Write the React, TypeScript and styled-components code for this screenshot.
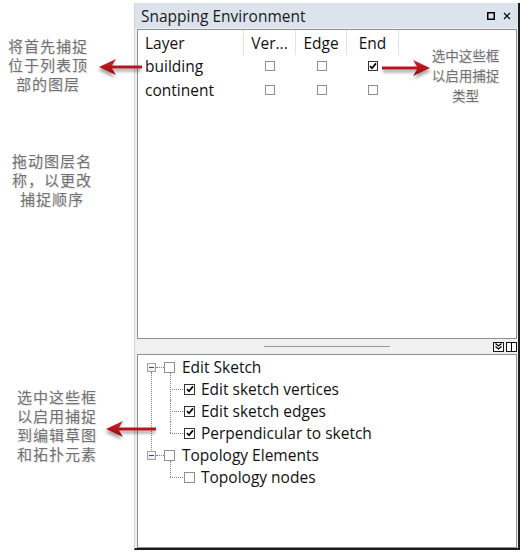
import styled, { createGlobalStyle } from "styled-components";

/* ── Global ──────────────────────────────────────────── */

const GlobalStyle = createGlobalStyle`
  * { box-sizing: border-box; }
  html, body { margin: 0; padding: 0; background: #fff; }
  body {
    font-family: "Open Sans", "Noto Sans", sans-serif;
    color: #111;
  }
`;

/* ── Page ────────────────────────────────────────────── */

const Page = styled.div`
  position: relative;
  width: 531px;
  height: 555px;
  padding-top: 3px;
  display: flex;
  overflow: hidden;
`;

const NotesColumn = styled.div`
  width: 134px;
  flex: none;
  display: flex;
  flex-direction: column;
`;

const Note = styled.div<{ $top: number; $left: number; $width: number }>`
  margin-top: ${(p) => p.$top}px;
  margin-left: ${(p) => p.$left}px;
  width: ${(p) => p.$width}px;
  font-family: "Noto Sans CJK SC", sans-serif;
  font-size: 15px;
  line-height: 19px;
  letter-spacing: 1px;
  text-align: center;
  color: #707070;
  text-shadow: 1px 1px 1px rgba(0, 0, 0, 0.12);
`;

const SideNote = styled(Note)`
  position: absolute;
  left: 293px;
  top: 15px;
  margin: 0;
  font-size: 13.5px;
  line-height: 20px;
  letter-spacing: 0;
`;

/* ── Window ──────────────────────────────────────────── */

const Window = styled.div`
  width: 386px;
  height: 547px;
  flex: none;
  display: flex;
  flex-direction: column;
  background: #f0f0f0;
  border-left: 1px solid #d2d2d2;
  border-right: 2px solid #1c1c1c;
  border-bottom: 2px solid #1c1c1c;
`;

const TitleBar = styled.div`
  height: 25px;
  flex: none;
  display: flex;
  align-items: center;
  justify-content: space-between;
  padding: 0 7px 0 6px;
  background: #dce3ec;
  font-size: 15.5px;
  color: #1a1a1a;
`;

const TitleButtons = styled.div`
  display: flex;
  align-items: center;
  gap: 8px;
`;

const WindowBody = styled.div`
  flex: 1;
  display: flex;
  flex-direction: column;
  padding: 1px 1px 0 2px;
`;

const Panel = styled.div<{ $height?: number }>`
  position: relative;
  background: #fff;
  border: 1px solid #8e9092;
  ${(p) => (p.$height ? `height: ${p.$height}px; flex: none;` : "flex: 1;")}
`;

/* ── Layer grid ──────────────────────────────────────── */

const Grid = styled.div`
  display: grid;
  grid-template-columns: 106px 52px 51px 52px;
  grid-auto-rows: 24px;
  font-size: 15.5px;
`;

const HeadCell = styled.div<{ $left?: boolean }>`
  height: 25px;
  display: flex;
  align-items: center;
  justify-content: ${(p) => (p.$left ? "flex-start" : "center")};
  padding-left: ${(p) => (p.$left ? "7px" : "0")};
  border-right: 1px solid #e3e3e3;
`;

const Cell = styled.div<{ $left?: boolean }>`
  display: flex;
  align-items: center;
  justify-content: ${(p) => (p.$left ? "flex-start" : "center")};
  padding-left: ${(p) => (p.$left ? "7px" : "0")};
`;

const Box = styled.span<{ $dark?: boolean; $size: number }>`
  width: ${(p) => p.$size}px;
  height: ${(p) => p.$size}px;
  flex: none;
  display: inline-flex;
  align-items: center;
  justify-content: center;
  background: #fff;
  border: 1px solid ${(p) => (p.$dark ? "#333" : "#8f8f8f")};
`;

/* ── Splitter ────────────────────────────────────────── */

const Splitter = styled.div`
  height: 15px;
  flex: none;
  display: grid;
  grid-template-columns: 1fr 126px 1fr;
  align-items: center;
`;

const Grip = styled.div`
  grid-column: 2;
  height: 1px;
  background: #9a9a9a;
`;

const PaneButtons = styled.div`
  grid-column: 3;
  justify-self: end;
  display: flex;
  gap: 2px;
`;

const PaneButton = styled.span`
  width: 11px;
  height: 10px;
  display: flex;
  align-items: center;
  justify-content: center;
  background: #fff;
  border: 1px solid #111;
`;

/* ── Tree ────────────────────────────────────────────── */

const Tree = styled.div`
  padding-top: 1px;
  font-size: 15.5px;
`;

const RootItem = styled.div`
  position: relative;
  &:not(:last-child)::after {
    content: "";
    position: absolute;
    left: 13px;
    top: 16px;
    bottom: -6px;
    border-left: 1px dotted #808080;
  }
`;

const RootRow = styled.div`
  height: 22px;
  display: flex;
  align-items: center;
  padding-left: 9px;
`;

const Expander = styled.span`
  width: 9px;
  height: 9px;
  flex: none;
  display: flex;
  align-items: center;
  justify-content: center;
  border: 1px solid #9aa3ae;
  background: linear-gradient(#fff, #e6e9ee);
  &::before {
    content: "";
    width: 5px;
    height: 1px;
    background: #3a4a6a;
  }
`;

const Connector = styled.span`
  width: 8px;
  flex: none;
  border-top: 1px dotted #808080;
`;

const Label = styled.span`
  margin-left: 7px;
  white-space: nowrap;
`;

const ChildRow = styled.div`
  position: relative;
  height: 22px;
  display: flex;
  align-items: center;
  margin-left: 32px;
  padding-left: 14px;
  &::before {
    content: "";
    position: absolute;
    left: 0;
    top: 11px;
    width: 13px;
    border-top: 1px dotted #808080;
  }
  &::after {
    content: "";
    position: absolute;
    left: 0;
    top: 0;
    height: 11px;
    border-left: 1px dotted #808080;
  }
  &:first-child::after { top: -5px; height: 16px; }
  &:not(:last-child)::after { height: 22px; }
  &:first-child:not(:last-child)::after { height: 27px; }
`;

const ChildLabel = styled(Label)`
  margin-left: 6px;
`;

/* ── Arrows ──────────────────────────────────────────── */

const ArrowWrap = styled.svg<{ $left: number; $top: number }>`
  position: absolute;
  left: ${(p) => p.$left}px;
  top: ${(p) => p.$top}px;
  overflow: visible;
  pointer-events: none;
`;

/* ── Pieces ──────────────────────────────────────────── */

function CheckMark() {
  return (
    <svg width="8" height="8" viewBox="0 0 8 8">
      <path d="M1 4.2 L3 6.3 L7 1.4" stroke="#000" strokeWidth="1.7" fill="none" />
    </svg>
  );
}

function CheckBox({ checked, dark, size }: { checked?: boolean; dark?: boolean; size: number }) {
  return (
    <Box $dark={dark || checked} $size={size}>
      {checked && <CheckMark />}
    </Box>
  );
}

function Arrow({ left, top, length, flip }: { left: number; top: number; length: number; flip?: boolean }) {
  const L = length;
  const d = `M${L} 0 L${L - 17} -8 L${L - 13} -1.6 L0 -1.4 L0 1.4 L${L - 13} 1.6 L${L - 17} 8 Z`;
  return (
    <ArrowWrap $left={left} $top={top} width={L} height="20" viewBox={`0 -10 ${L} 20`}>
      <defs>
        <linearGradient id="ar" x1="0" y1="0" x2="0" y2="1">
          <stop offset="0" stopColor="#d6222a" />
          <stop offset="1" stopColor="#8e0c10" />
        </linearGradient>
        <filter id="sh" x="-20%" y="-80%" width="140%" height="260%">
          <feDropShadow dx="1" dy="3" stdDeviation="1.6" floodColor="#000" floodOpacity="0.35" />
        </filter>
      </defs>
      <path d={d} fill="url(#ar)" filter="url(#sh)" transform={flip ? `translate(${L} 0) scale(-1 1)` : undefined} />
    </ArrowWrap>
  );
}

const LAYERS = [
  { name: "building", ver: false, edge: false, end: true },
  { name: "continent", ver: false, edge: false, end: false },
];

const SKETCH = [
  { label: "Edit sketch vertices", checked: true },
  { label: "Edit sketch edges", checked: true },
  { label: "Perpendicular to sketch", checked: true },
];

/* ── App ─────────────────────────────────────────────── */

export default function App() {
  return (
    <>
      <GlobalStyle />
      <Page>
        <NotesColumn>
          <Note $top={33} $left={7} $width={82}>将首先捕捉<br />位于列表顶<br />部的图层</Note>
          <Note $top={58} $left={10} $width={84}>拖动图层名<br />称，以更改<br />捕捉顺序</Note>
          <Note $top={179} $left={16} $width={82}>选中这些框<br />以启用捕捉<br />到编辑草图<br />和拓扑元素</Note>
        </NotesColumn>

        <Window>
          <TitleBar>
            <span>Snapping Environment</span>
            <TitleButtons>
              <svg width="8" height="8" viewBox="0 0 8 8">
                <rect x="0.75" y="0.75" width="6.5" height="6.5" fill="none" stroke="#000" strokeWidth="1.5" />
              </svg>
              <svg width="8" height="8" viewBox="0 0 8 8">
                <path d="M1 1 L7 7 M7 1 L1 7" stroke="#000" strokeWidth="1.2" />
              </svg>
            </TitleButtons>
          </TitleBar>

          <WindowBody>
            <Panel $height={310}>
              <Grid>
                <HeadCell $left>Layer</HeadCell>
                <HeadCell>Ver...</HeadCell>
                <HeadCell>Edge</HeadCell>
                <HeadCell>End</HeadCell>
                {LAYERS.map((l) => (
                  <>
                    <Cell key={l.name} $left>{l.name}</Cell>
                    <Cell><CheckBox size={10} checked={l.ver} /></Cell>
                    <Cell><CheckBox size={10} checked={l.edge} /></Cell>
                    <Cell><CheckBox size={10} checked={l.end} /></Cell>
                  </>
                ))}
              </Grid>
              <SideNote $top={0} $left={0} $width={69}>选中这些框<br />以启用捕捉<br />类型</SideNote>
            </Panel>

            <Splitter>
              <Grip />
              <PaneButtons>
                <PaneButton>
                  <svg width="7" height="7" viewBox="0 0 7 7">
                    <path d="M0.5 0.5 L3.5 3 L6.5 0.5 M0.5 3.5 L3.5 6 L6.5 3.5" stroke="#000" strokeWidth="1.3" fill="none" />
                  </svg>
                </PaneButton>
                <PaneButton>
                  <svg width="3" height="8" viewBox="0 0 3 8">
                    <path d="M1.5 0 L1.5 8" stroke="#000" strokeWidth="1" />
                  </svg>
                </PaneButton>
              </PaneButtons>
            </Splitter>

            <Panel>
              <Tree>
                <RootItem>
                  <RootRow>
                    <Expander />
                    <Connector />
                    <CheckBox size={11} />
                    <Label>Edit Sketch</Label>
                  </RootRow>
                  <div>
                    {SKETCH.map((s) => (
                      <ChildRow key={s.label}>
                        <CheckBox size={11} checked={s.checked} />
                        <ChildLabel>{s.label}</ChildLabel>
                      </ChildRow>
                    ))}
                  </div>
                </RootItem>
                <RootItem>
                  <RootRow>
                    <Expander />
                    <Connector />
                    <CheckBox size={11} />
                    <Label>Topology Elements</Label>
                  </RootRow>
                  <div>
                    <ChildRow>
                      <CheckBox size={11} />
                      <ChildLabel>Topology nodes</ChildLabel>
                    </ChildRow>
                  </div>
                </RootItem>
              </Tree>
            </Panel>
          </WindowBody>
        </Window>

        <Arrow left={99} top={57} length={43} flip />
        <Arrow left={382} top={58} length={48} />
        <Arrow left={106} top={419} length={50} flip />
      </Page>
    </>
  );
}
